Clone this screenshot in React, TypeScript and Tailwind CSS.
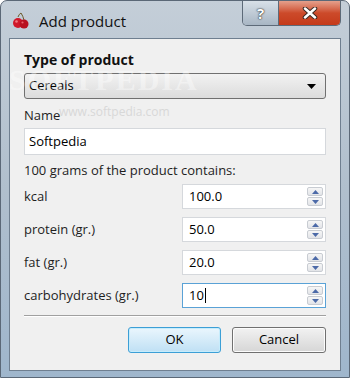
import React from 'react';

const font = { fontFamily: '"Open Sans", "Noto Sans", "Liberation Sans", sans-serif' };

const Spinner = () => (
    <div className="flex flex-col w-[18px] h-full py-[2px] pr-[2px] gap-[1px]">
        <div className="flex-1 flex items-center justify-center border border-[#c8ccd2] rounded-[2px] bg-gradient-to-b from-[#f6f6f6] to-[#e2e4e8]">
            <svg width="7" height="4" viewBox="0 0 7 4"><path d="M0 4 L3.5 0 L7 4 Z" fill="#4c6aa8" /></svg>
        </div>
        <div className="flex-1 flex items-center justify-center border border-[#c8ccd2] rounded-[2px] bg-gradient-to-b from-[#f6f6f6] to-[#e2e4e8]">
            <svg width="7" height="4" viewBox="0 0 7 4"><path d="M0 0 L3.5 4 L7 0 Z" fill="#4c6aa8" /></svg>
        </div>
    </div>
);

const NumRow = ({ label, value, focused }: { label: string; value: string; focused?: boolean }) => (
    <div className="flex items-center justify-between h-[25px]">
        <span className="text-[13px] text-[#1e1e1e]">{label}</span>
        <div className={`flex items-center w-[144px] h-full bg-white border ${focused ? 'border-[#5aa2d6]' : 'border-[#d5d8dc]'}`}>
            <span className="flex-1 pl-[6px] text-[13px] text-black flex items-center">
                {value}
                {focused && <span className="inline-block w-[1px] h-[15px] bg-black ml-[1px]" />}
            </span>
            <Spinner />
        </div>
    </div>
);

const App = () => {
    return (
        <div className="w-[350px] h-[378px] relative overflow-hidden rounded-t-[7px] bg-gradient-to-b from-[#c4ced8] via-[#b0bfcd] to-[#9fb6cc] border border-[#5b6877]" style={font}>
            {/* Title bar */}
            <div className="flex items-start h-[37px]">
                <div className="flex items-center gap-[9px] pl-[11px] pt-[9px]">
                    <svg width="18" height="18" viewBox="0 0 18 18">
                        <path d="M6 5 Q7 2 9 1" stroke="#6b5a2a" strokeWidth="1" fill="none" />
                        <path d="M9 1 Q11 4 12 8" stroke="#6b5a2a" strokeWidth="1" fill="none" />
                        <circle cx="6" cy="11" r="5" fill="#d0182a" />
                        <circle cx="12" cy="12" r="4.5" fill="#b8101f" />
                        <circle cx="4.5" cy="9.5" r="1.3" fill="#f07a80" />
                        <circle cx="10.5" cy="10.5" r="1.1" fill="#e8606a" />
                    </svg>
                    <span className="text-[15px] text-[#111]">Add product</span>
                </div>
                <div className="ml-auto mr-[8px] flex h-[25px] border border-t-0 border-[#5d6a78] rounded-b-[5px] overflow-hidden">
                    <div className="w-[36px] flex items-center justify-center bg-gradient-to-b from-[#d8e0e8] to-[#a8b6c4] border-r border-[#5d6a78]">
                        <span className="text-[15px] font-bold text-white [text-shadow:0_0_2px_#222,0_0_1px_#222]">?</span>
                    </div>
                    <div className="w-[61px] flex items-center justify-center bg-gradient-to-b from-[#e4a08c] via-[#cc4a2a] to-[#c53a1a]">
                        <svg width="16" height="12" viewBox="0 0 16 12">
                            <path d="M3 1.5 L13 10.5 M13 1.5 L3 10.5" stroke="#3a2a24" strokeWidth="4.5" strokeLinecap="round" />
                            <path d="M3 1.5 L13 10.5 M13 1.5 L3 10.5" stroke="#fff" strokeWidth="2.5" strokeLinecap="round" />
                        </svg>
                    </div>
                </div>
            </div>

            {/* Client area */}
            <div className="mx-[8px] h-[333px] border border-[#6f7f90] bg-[#f0f0f0] px-[14px] pt-[11px] flex flex-col">
                <span className="text-[14px] font-bold text-[#111] leading-[20px]">Type of product</span>
                <div className="mt-[3px] h-[26px] flex items-center justify-between px-[4px] border border-[#707070] rounded-[3px] bg-gradient-to-b from-[#f2f2f2] to-[#dcdcdc]">
                    <span className="text-[13px] text-black">Cereals</span>
                    <svg width="9" height="5" viewBox="0 0 9 5" className="mr-[5px]"><path d="M0 0 L9 0 L4.5 5 Z" fill="#000" /></svg>
                </div>
                <span className="mt-[6px] text-[13px] text-[#1e1e1e] leading-[20px]">Name</span>
                <div className="mt-[3px] h-[27px] flex items-center px-[4px] border border-[#d5d8dc] bg-white">
                    <span className="text-[13px] text-black">Softpedia</span>
                </div>
                <span className="mt-[5px] text-[13px] text-[#1e1e1e] leading-[20px]">100 grams of the product contains:</span>
                <div className="mt-[4px] flex flex-col gap-[8px]">
                    <NumRow label="kcal" value="100.0" />
                    <NumRow label="protein (gr.)" value="50.0" />
                    <NumRow label="fat (gr.)" value="20.0" />
                    <NumRow label="carbohydrates (gr.)" value="10" focused />
                </div>
                <div className="mt-[7px] h-[1px] bg-[#a0a0a0] border-b border-white box-content" />
                <div className="mt-[10px] flex justify-end gap-[11px]">
                    <button className="w-[93px] h-[26px] rounded-[3px] border border-[#3c9fd6] bg-gradient-to-b from-[#eaf6fd] to-[#bfe0f4] text-[13px] text-black shadow-[inset_0_0_0_1px_#c6ecfc]">OK</button>
                    <button className="w-[94px] h-[26px] rounded-[3px] border border-[#707070] bg-gradient-to-b from-[#f2f2f2] to-[#d6d6d6] text-[13px] text-black shadow-[inset_0_0_0_1px_#fcfcfc]">Cancel</button>
                </div>
            </div>

            {/* watermark */}
            <span className="absolute left-[8px] top-[56px] text-[30px] font-bold tracking-[2px] text-white/40 pointer-events-none" style={{ fontFamily: '"Liberation Serif", serif' }}>SOFTPEDIA</span>
            <span className="absolute left-[58px] top-[102px] text-[12px] text-[#d8d8d8] pointer-events-none">www.softpedia.com</span>
        </div>
    );
};

export default App;
